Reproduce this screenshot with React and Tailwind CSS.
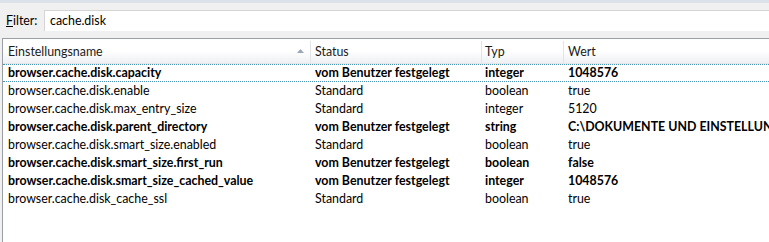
import React from 'react';

const rows = [
  { name: 'browser.cache.disk.capacity', status: 'vom Benutzer festgelegt', type: 'integer', value: '1048576', bold: true, focused: true },
  { name: 'browser.cache.disk.enable', status: 'Standard', type: 'boolean', value: 'true' },
  { name: 'browser.cache.disk.max_entry_size', status: 'Standard', type: 'integer', value: '5120' },
  { name: 'browser.cache.disk.parent_directory', status: 'vom Benutzer festgelegt', type: 'string', value: 'C:\\DOKUMENTE UND EINSTELLUNGEN\\USER\\LOKALE EINSTELLUNGEN', bold: true },
  { name: 'browser.cache.disk.smart_size.enabled', status: 'Standard', type: 'boolean', value: 'true' },
  { name: 'browser.cache.disk.smart_size.first_run', status: 'vom Benutzer festgelegt', type: 'boolean', value: 'false', bold: true },
  { name: 'browser.cache.disk.smart_size_cached_value', status: 'vom Benutzer festgelegt', type: 'integer', value: '1048576', bold: true },
  { name: 'browser.cache.disk_cache_ssl', status: 'Standard', type: 'boolean', value: 'true' },
];

const cols = 'grid grid-cols-[308px_171px_82px_1fr]';

const Row = ({ row }) => (
  <div
    className={`${cols} h-[18px] items-center whitespace-nowrap text-[#000] ${row.bold ? 'font-bold' : ''} ${
      row.focused ? 'border-y border-dotted border-[#4a93b5]' : 'border-y border-transparent'
    }`}
  >
    <span className="pl-[5px] overflow-hidden">{row.name}</span>
    <span className="pl-[4px] overflow-hidden">{row.status}</span>
    <span className="pl-[3px] overflow-hidden">{row.type}</span>
    <span className="pl-[4px] overflow-hidden">{row.value}</span>
  </div>
);

export default function App() {
  return (
    <div className="w-[769px] h-[242px] overflow-hidden bg-[#f0f0f0] text-[12.4px] flex flex-col" style={{ fontFamily: 'Lato, "Noto Sans", sans-serif' }}>
      <div className="h-[3px] bg-[#dce2ea] shrink-0" />
      <div className="flex items-center h-[35px] shrink-0">
        <span className="pl-[6px] pt-[1px] w-[44px] text-[#000]">
          <span className="underline">F</span>ilter:
        </span>
        <div className="flex-1 h-[21px] bg-white border-t border-l border-[#d5d5d5] flex items-center pl-[5px] text-[#000]">
          cache.disk
        </div>
      </div>
      <div className="flex-1 ml-[2px] border-t border-l border-[#9a9ea6] bg-white flex flex-col min-h-0">
        <div className={`${cols} h-[25px] pt-[2px] items-center bg-gradient-to-b from-white via-white to-[#eef0f3] border-b border-[#e4e6ea] text-[#1a1a1a] shrink-0`}>
          <div className="flex items-center justify-between h-full border-r border-[#e2e4e8] pl-[5px] pr-[6px]">
            <span>Einstellungsname</span>
            <svg width="7" height="4" viewBox="0 0 7 4" className="mb-[3px]">
              <path d="M0 4 L3.5 0 L7 4 Z" fill="#9aa7b6" />
            </svg>
          </div>
          <div className="flex items-center h-full border-r border-[#e2e4e8] pl-[4px]">Status</div>
          <div className="flex items-center h-full border-r border-[#e2e4e8] pl-[3px]">Typ</div>
          <div className="flex items-center h-full pl-[4px]">Wert</div>
        </div>
        <div className="flex flex-col">
          {rows.map((r) => (
            <Row key={r.name} row={r} />
          ))}
        </div>
      </div>
    </div>
  );
}
